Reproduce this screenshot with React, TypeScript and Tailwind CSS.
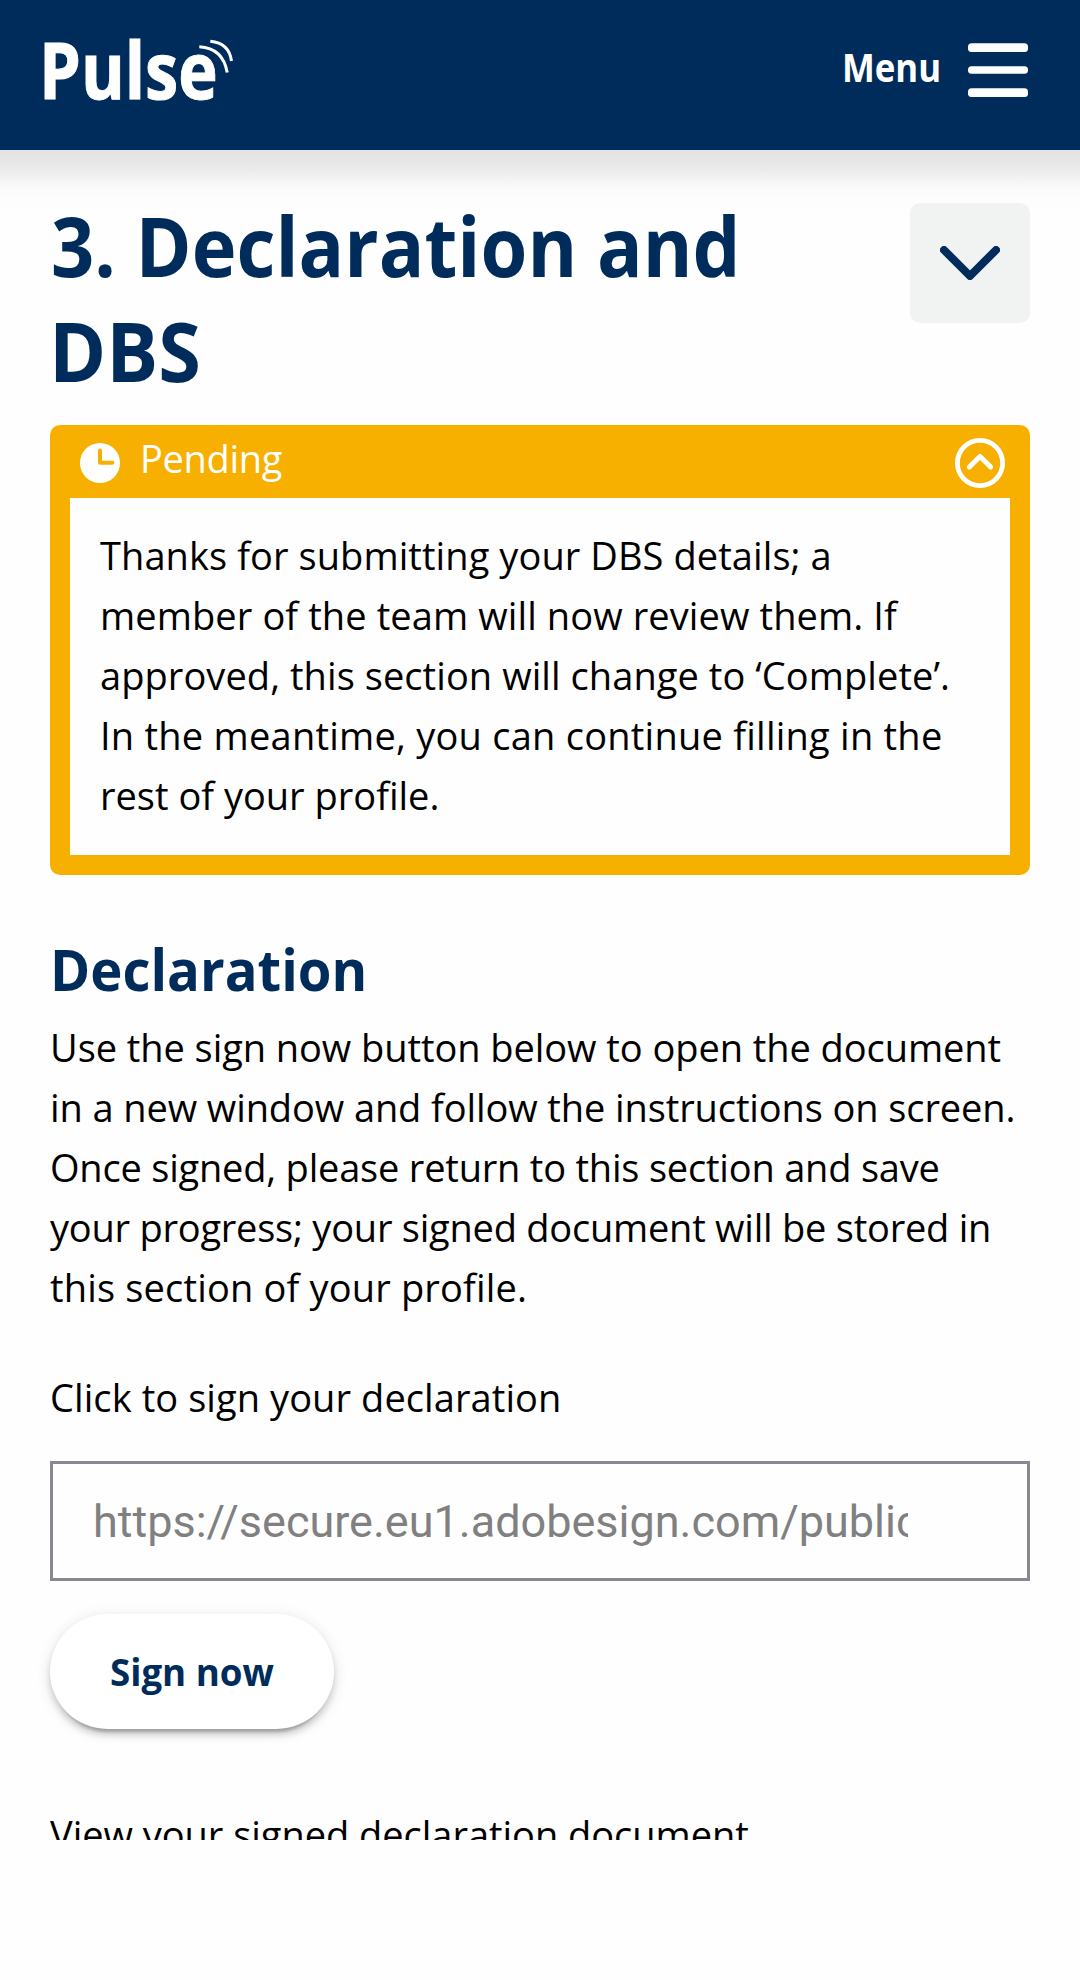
import type { ReactNode } from "react";

function Line({ className = "", children }: { className?: string; children: ReactNode }) {
  return <span className={`block origin-left whitespace-nowrap ${className}`}>{children}</span>;
}

function Logo() {
  return (
    <div className="relative ml-[39px] h-[150px] w-[200px]">
      <div className="flex h-[137px] origin-left scale-x-[0.855] items-center text-[78px] leading-none font-bold [-webkit-text-stroke:1px_white]">
        Pulse
      </div>
      <svg className="absolute top-[36px] left-[155px]" width="44" height="42" viewBox="194 36 44 42" fill="none" stroke="#fff" strokeWidth="3">
        <path d="M199.3 46.7Q223 48 227.2 72.5" />
        <path d="M210.3 41.3Q229 43 231.5 61" />
      </svg>
    </div>
  );
}

function Header() {
  return (
    <header className="flex h-[150px] justify-between bg-[#002c5b] text-white">
      <Logo />
      <button className="mr-[52px] flex h-[150px] w-[186px] items-start justify-between">
        <span className="mt-[37px] block origin-left scale-x-[0.87] text-[40px] leading-[60px] font-bold">Menu</span>
        <svg className="mt-[43px]" width="60" height="54" viewBox="0 0 60 54" fill="#fff">
          <rect y="0.3" width="60" height="8.6" rx="3.5" />
          <rect y="23.2" width="60" height="7.6" rx="3.5" />
          <rect y="45.3" width="60" height="8.6" rx="3.5" />
        </svg>
      </button>
    </header>
  );
}

function StatusPanel() {
  return (
    <section className="mt-[22px] rounded-[10px] bg-[#f7b000] px-[20px] pb-[20px]">
      <div className="flex h-[73px] items-center pt-[3px] pr-[5px] pl-[10px] text-white">
        <svg width="40" height="40" viewBox="0 0 40 40">
          <circle cx="20" cy="20" r="20" fill="#fff" />
          <path d="M20 7.5V19.8H32.4" fill="none" stroke="#f7b000" strokeWidth="4" strokeLinecap="round" strokeLinejoin="round" />
        </svg>
        <span className="ml-[20px] flex-1 pb-[10px] text-[38px] leading-[60px] tracking-[-0.3px]">Pending</span>
        <svg width="50" height="50" viewBox="0 0 50 50" fill="none" stroke="#fff">
          <circle cx="25" cy="25" r="22.6" strokeWidth="4.8" />
          <path d="M14.3 29L25 18.5L35.7 29" strokeWidth="5" strokeLinecap="round" strokeLinejoin="round" />
        </svg>
      </div>
      <p className="bg-[#fefefe] pt-[27px] pb-[30px] pl-[30px]">
        <Line className="tracking-[0.08px]">Thanks for submitting your DBS details; a</Line>
        <Line className="tracking-[0.1px]">member of the team will now review them. If</Line>
        <Line className="tracking-[0.07px]">approved, this section will change to ‘Complete’.</Line>
        <Line className="tracking-[0.24px]">In the meantime, you can continue filling in the</Line>
        <Line>rest of your profile.</Line>
      </p>
    </section>
  );
}

export default function App() {
  return (
    <div className="h-[1980px] w-[1080px] overflow-hidden bg-[#fefefe] font-['Open_Sans','Noto_Sans',sans-serif] text-[38px] leading-[60px] text-black">
      <Header />
      <main className="bg-[linear-gradient(to_bottom,#e3e3e3_0px,#e6e6e6_10px,#ececec_21px,#f4f4f4_30px,#fafafa_38px,#fdfdfd_48px,#fefefe_65px)] px-[50px] pt-[43px]">
        <div className="flex items-start justify-between">
          <h1 className="text-[82px] leading-[105px] font-bold text-[#002c5b]">
            <Line className="ml-[1px] scale-x-[0.924]">3. Declaration and</Line>
            <Line className="-ml-[1px] scale-x-[0.943]">DBS</Line>
          </h1>
          <button className="mt-[10px] flex size-[120px] shrink-0 items-start justify-center rounded-[10px] bg-[#f1f3f3] pt-[43px]">
            <svg width="60" height="34" viewBox="0 0 60 34" fill="none" stroke="#002c5b" strokeWidth="8" strokeLinecap="round" strokeLinejoin="round">
              <path d="M4 4L30 30L56 4" />
            </svg>
          </button>
        </div>

        <StatusPanel />

        <h2 className="mt-[64px] text-[57px] font-bold text-[#002c5b]">
          <Line className="scale-x-[0.955]">Declaration</Line>
        </h2>
        <p className="mt-[18px]">
          <Line className="tracking-[-0.06px]">Use the sign now button below to open the document</Line>
          <Line className="tracking-[-0.1px]">in a new window and follow the instructions on screen.</Line>
          <Line className="tracking-[-0.2px]">Once signed, please return to this section and save</Line>
          <Line className="tracking-[-0.23px]">your progress; your signed document will be stored in</Line>
          <Line className="tracking-[0.17px]">this section of your profile.</Line>
        </p>

        <p className="mt-[50px] tracking-[0.08px]">Click to sign your declaration</p>
        <div className="mt-[34px] h-[120px] border-[3px] border-[#878891] pr-[119px] pl-[40px]">
          <div className="overflow-hidden pt-px font-[Roboto,sans-serif] text-[45px] leading-[114px] whitespace-nowrap text-[#808080]">
            https://secure.eu1.adobesign.com/public
          </div>
        </div>
        <button className="mt-[33px] flex h-[115px] w-[284px] items-center rounded-full bg-white pb-[2px] pl-[60px] font-bold text-[#002c5b] shadow-[0_9px_3px_-6px_rgba(0,0,0,0.2),0_6px_6px_0_rgba(0,0,0,0.14),0_3px_15px_0_rgba(0,0,0,0.12)]">
          <Line className="scale-x-[0.965]">Sign now</Line>
        </button>
        <p className="mt-[75px] h-[36px] overflow-hidden">
          <Line className="tracking-[-0.03px]">View your signed declaration document</Line>
        </p>
      </main>
    </div>
  );
}
